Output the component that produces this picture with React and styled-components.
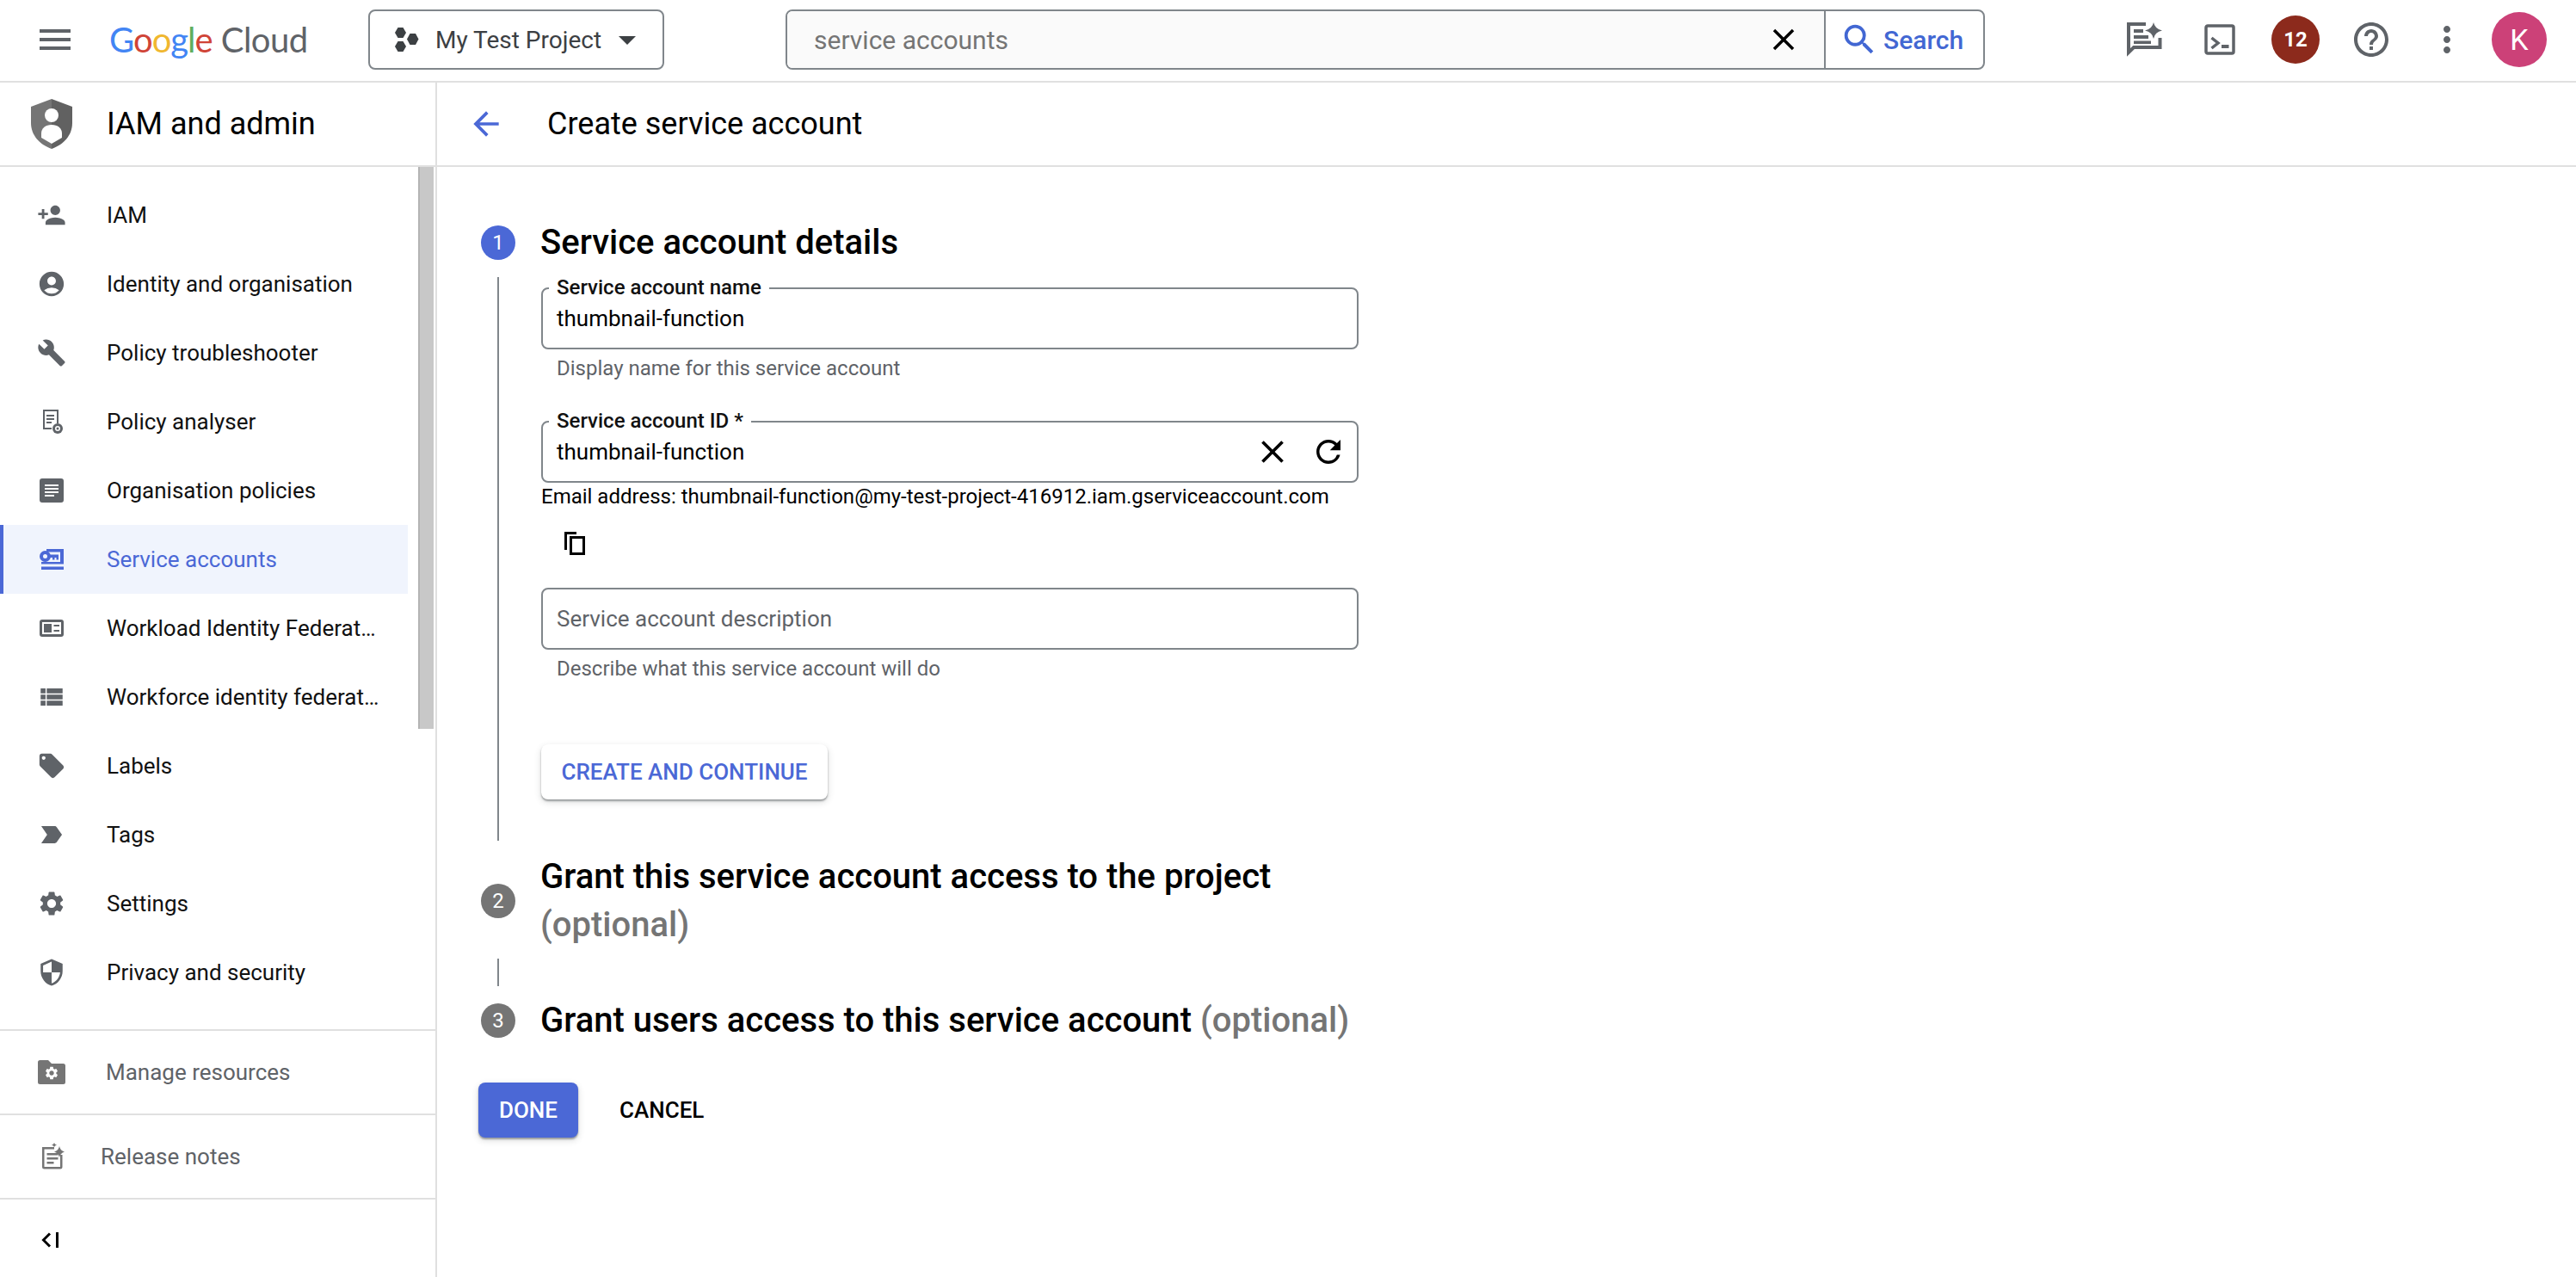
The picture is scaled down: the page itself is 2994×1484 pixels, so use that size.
import React from 'react'
import styled, { createGlobalStyle } from 'styled-components'
import {
  MdMenu, MdArrowBack, MdClose, MdSearch, MdHelpOutline, MdMoreVert, MdPersonAdd, MdAccountCircle,
  MdBuild, MdViewList, MdLocalOffer, MdLabelImportant, MdSettings, MdSecurity, MdRefresh,
  MdArrowDropDown,
} from 'react-icons/md'

const GEAR = 'M19.14 12.94c.04-.3.06-.61.06-.94 0-.32-.02-.64-.07-.94l2.03-1.58c.18-.14.23-.41.12-.61l-1.92-3.32c-.12-.22-.37-.29-.59-.22l-2.39.96c-.5-.38-1.03-.7-1.62-.94l-.36-2.54c-.04-.24-.24-.41-.48-.41h-3.84c-.24 0-.43.17-.47.41l-.36 2.54c-.59.24-1.13.57-1.62.94l-2.39-.96c-.22-.08-.47 0-.59.22L2.74 8.87c-.12.21-.08.47.12.61l2.03 1.58c-.05.3-.09.63-.09.94s.02.64.07.94l-2.03 1.58c-.18.14-.23.41-.12.61l1.92 3.32c.12.22.37.29.59.22l2.39-.96c.5.38 1.03.7 1.62.94l.36 2.54c.05.24.24.41.48.41h3.84c.24 0 .44-.17.47-.41l.36-2.54c.59-.24 1.13-.56 1.62-.94l2.39.96c.22.08.47 0 .59-.22l1.92-3.32c.12-.22.07-.47-.12-.61l-2.01-1.58zM12 15.6c-1.98 0-3.6-1.62-3.6-3.6s1.62-3.6 3.6-3.6 3.6 1.62 3.6 3.6-1.62 3.6-3.6 3.6z'

const GlobalStyle = createGlobalStyle`
  html, body { margin: 0; padding: 0; background: #fff; }
  body { font-family: Roboto, "Liberation Sans", sans-serif; color: #000; overflow: hidden; }
  * { box-sizing: border-box; }
`

const ShieldLogo = () => (
  <svg width="48" height="58" viewBox="0 0 48 58">
    <path d="M24 0 L0 9 V28 C0 42 10 53 24 58 Z" fill="#757575" />
    <path d="M24 0 L48 9 V28 C48 42 38 53 24 58 Z" fill="#616161" />
    <circle cx="24" cy="19" r="8" fill="#fff" />
    <path d="M24 30 C31 30 36 34 36 40 V45 L24 52 L12 45 V40 C12 34 17 30 24 30 Z" fill="#fff" />
  </svg>
)

const HexIcon = () => (
  <svg width="28" height="28" viewBox="0 0 28 28" fill="#3c4043">
    <path d="M3.5 0 H9.5 L13 6 L9.5 12 H3.5 L0 6 Z" />
    <path d="M17.5 7 H24 L27.5 13.5 L24 20 H17.5 L14 13.5 Z" />
    <path d="M3.5 16 H9.5 L13 22 L9.5 28 H3.5 L0 22 Z" />
  </svg>
)

const SparkChat = () => (
  <svg width="41" height="40" viewBox="0 0 41 40" fill="#5f6368">
    <path d="M22 2 H2 V35 L8 29 H38.5 V18" fill="none" stroke="#5f6368" strokeWidth="4" />
    <rect x="8" y="8" width="11" height="4" />
    <rect x="8" y="15" width="17" height="4" />
    <rect x="8" y="21.5" width="20" height="3.5" />
    <path d="M31 0 Q32.5 7.5 41 9.5 Q32.5 11 31 19 Q29.5 11 21 9.5 Q29.5 7.5 31 0 Z" />
  </svg>
)

const TerminalIcon = () => (
  <svg width="36" height="36" viewBox="0 0 36 36">
    <rect x="2" y="2" width="32" height="32" rx="2" fill="none" stroke="#5f6368" strokeWidth="3.5" />
    <path d="M8.5 16 L16 22 L8.5 28" fill="none" stroke="#5f6368" strokeWidth="3.5" />
    <rect x="20" y="24" width="8.5" height="4" fill="#5f6368" />
  </svg>
)

const AnalyserIcon = () => (
  <svg viewBox="0 0 34 34" fill="#5f6368">
    <path d="M7 3 H25 V19 H23 V5 H9 V24 H17 V26 H7 Z" />
    <rect x="11" y="9" width="9" height="2" />
    <rect x="11" y="13" width="9" height="2" />
    <rect x="11" y="17" width="6" height="2" />
    <circle cx="24" cy="25" r="6" />
    <circle cx="24" cy="25" r="3" fill="#fff" />
    <circle cx="24" cy="25" r="1.5" />
  </svg>
)

const PoliciesIcon = () => (
  <svg viewBox="0 0 34 34" fill="#5f6368">
    <path fillRule="evenodd" d="M6 3 H28 A3 3 0 0 1 31 6 V28 A3 3 0 0 1 28 31 H6 A3 3 0 0 1 3 28 V6 A3 3 0 0 1 6 3 Z M9 10 V12 H25 V10 Z M9 14 V16 H25 V14 Z M9 18 V20 H25 V18 Z M9 22 V24 H20 V22 Z" />
  </svg>
)

const ServiceAccountIcon = () => (
  <svg viewBox="0 0 34 34" fill="currentColor">
    <path fillRule="evenodd" d="M9.5 7 A6.5 6.5 0 1 1 9.5 20 A6.5 6.5 0 1 1 9.5 7 Z M9.5 11 A2.5 2.5 0 1 0 9.5 16 A2.5 2.5 0 1 0 9.5 11 Z" />
    <path d="M11 5 H31 V22.5 H5 V20 H27 V8.5 H11 Z" />
    <rect x="15" y="11.5" width="10" height="3.5" />
    <rect x="18" y="15" width="2.5" height="2.5" />
    <rect x="22.5" y="15" width="2.5" height="2.5" />
    <rect x="5" y="25.5" width="26" height="3.5" />
  </svg>
)

const WorkloadIcon = () => (
  <svg viewBox="0 0 34 34" fill="#5f6368">
    <rect x="3" y="7" width="28" height="20" rx="3" />
    <rect x="6" y="10" width="22" height="14" fill="#fff" />
    <rect x="8" y="12" width="9" height="10" />
    <rect x="19.5" y="13" width="6.5" height="2" />
    <rect x="19.5" y="19" width="6.5" height="2" />
  </svg>
)

const FolderGearIcon = () => (
  <svg viewBox="0 0 36 36">
    <path d="M4.5 4 H14 L18 8 H31.5 A2.5 2.5 0 0 1 34 10.5 V29.5 A2.5 2.5 0 0 1 31.5 32 H4.5 A2.5 2.5 0 0 1 2 29.5 V6.5 A2.5 2.5 0 0 1 4.5 4 Z" fill="#757575" />
    <svg x="9" y="10" width="18" height="18" viewBox="0 0 24 24"><path d={GEAR} fill="#fff" /></svg>
  </svg>
)

const ReleaseIcon = () => (
  <svg viewBox="0 0 34 34" fill="#757575">
    <path d="M6 6 H20 V8.5 H8.5 V29 H27 V15 H29.5 V29 A2.5 2.5 0 0 1 27 31.5 H8.5 A2.5 2.5 0 0 1 6 29 Z" />
    <rect x="11.5" y="13" width="13" height="2.5" />
    <rect x="11.5" y="18" width="13" height="2.5" />
    <rect x="11.5" y="23" width="8" height="2.5" />
    <path d="M26 5 Q27 10 32 11.5 Q27 13 26 18 Q25 13 20 11.5 Q25 10 26 5 Z" />
    <path d="M20 1 Q20.6 3 23 3.5 Q20.6 4 20 6 Q19.4 4 17 3.5 Q19.4 3 20 1 Z" />
  </svg>
)

const CollapseIcon = () => (
  <svg width="20" height="18" viewBox="0 0 20 18">
    <path d="M10 1.5 L2.5 9 L10 16.5" fill="none" stroke="#000" strokeWidth="3" />
    <rect x="17" y="0" width="3" height="18" fill="#000" />
  </svg>
)

const CopyIcon = () => (
  <svg width="24" height="27" viewBox="0 0 24 27" fill="#000">
    <path d="M0 0 H14 V3 H3 V21 H0 Z" />
    <path fillRule="evenodd" d="M6 5 H24 V27 H6 Z M9 8 V24 H21 V8 Z" />
  </svg>
)

const navItems = [
  { label: 'IAM', Icon: MdPersonAdd },
  { label: 'Identity and organisation', Icon: MdAccountCircle },
  { label: 'Policy troubleshooter', Icon: MdBuild },
  { label: 'Policy analyser', Icon: AnalyserIcon },
  { label: 'Organisation policies', Icon: PoliciesIcon },
  { label: 'Service accounts', Icon: ServiceAccountIcon, active: true },
  { label: 'Workload Identity Federation', Icon: WorkloadIcon },
  { label: 'Workforce identity federation', Icon: MdViewList },
  { label: 'Labels', Icon: MdLocalOffer },
  { label: 'Tags', Icon: MdLabelImportant },
  { label: 'Settings', Icon: MdSettings },
  { label: 'Privacy and security', Icon: MdSecurity },
]

export default function App() {
  return (
    <Page>
      <GlobalStyle />
      <TopBar>
        <MenuButton><MdMenu size={48} /></MenuButton>
        <Logo>
          <Letter $c="#4285f4">G</Letter><Letter $c="#d04437">o</Letter><Letter $c="#f0b72f">o</Letter>
          <Letter $c="#4285f4">g</Letter><Letter $c="#5fae5f">l</Letter><Letter $c="#d04437">e</Letter>
          <CloudWord>Cloud</CloudWord>
        </Logo>
        <ProjectPicker>
          <HexIcon />
          <ProjectName>My Test Project</ProjectName>
          <MdArrowDropDown size={48} color="#3c4043" />
        </ProjectPicker>
        <SearchBox>
          <SearchField>
            <SearchText>service accounts</SearchText>
            <MdClose size={42} color="#000" />
          </SearchField>
          <SearchButton><MdSearch size={46} /><span>Search</span></SearchButton>
        </SearchBox>
        <TopActions>
          <ActionSlot><SparkChat /></ActionSlot>
          <ActionSlot><TerminalIcon /></ActionSlot>
          <ActionSlot><Badge>12</Badge></ActionSlot>
          <ActionSlot><MdHelpOutline size={48} /></ActionSlot>
          <ActionSlot><MdMoreVert size={48} /></ActionSlot>
          <Avatar>K</Avatar>
        </TopActions>
      </TopBar>
      <Body>
        <Sidebar>
          <SideHeader>
            <ShieldLogo />
            <SideTitle>IAM and admin</SideTitle>
          </SideHeader>
          <NavArea>
            <NavList>
              {navItems.map(({ label, Icon, active }) => (
                <NavRow key={label} $active={active}>
                  <NavIcon $active={active}><Icon /></NavIcon>
                  <NavLabel>{label}</NavLabel>
                </NavRow>
              ))}
            </NavList>
            <ScrollThumb />
          </NavArea>
          <FootRow>
            <NavIcon $size={36} $left={42} $muted><FolderGearIcon /></NavIcon>
            <FootLabel $gap={45}>Manage resources</FootLabel>
          </FootRow>
          <FootRow>
            <NavIcon $left={43} $muted><ReleaseIcon /></NavIcon>
            <FootLabel $gap={40}>Release notes</FootLabel>
          </FootRow>
          <CollapseRow><CollapseIcon /></CollapseRow>
        </Sidebar>
        <Main>
          <MainHeader>
            <BackArrow><MdArrowBack size={44} /></BackArrow>
            <PageTitle>Create service account</PageTitle>
          </MainHeader>
          <Content>
            <StepHead>
              <StepNumber $active>1</StepNumber>
              <StepTitle>Service account details</StepTitle>
            </StepHead>
            <StepBody>
              <FieldBox>
                <FieldLabel>Service account name</FieldLabel>
                <FieldValue>thumbnail-function</FieldValue>
              </FieldBox>
              <Hint>Display name for this service account</Hint>
              <FieldBox $gap={47}>
                <FieldLabel>Service account ID *</FieldLabel>
                <FieldValue>thumbnail-function</FieldValue>
                <FieldActions>
                  <MdClose size={44} />
                  <MdRefresh size={42} />
                </FieldActions>
              </FieldBox>
              <EmailLine>Email address: thumbnail-function@my-test-project-416912.iam.gserviceaccount.com</EmailLine>
              <CopyRow><CopyIcon /></CopyRow>
              <FieldBox $gap={22}>
                <FieldValue $placeholder>Service account description</FieldValue>
              </FieldBox>
              <Hint>Describe what this service account will do</Hint>
              <RaisedButton>CREATE AND CONTINUE</RaisedButton>
            </StepBody>
            <StepHead $top={14}>
              <StepNumber>2</StepNumber>
              <StepTitle>Grant this service account access to the project <Optional>(optional)</Optional></StepTitle>
            </StepHead>
            <Connector />
            <StepHead $top={12}>
              <StepNumber>3</StepNumber>
              <StepTitle>Grant users access to this service account <Optional>(optional)</Optional></StepTitle>
            </StepHead>
            <FormActions>
              <DoneButton>DONE</DoneButton>
              <CancelButton>CANCEL</CancelButton>
            </FormActions>
          </Content>
        </Main>
      </Body>
    </Page>
  )
}

const Page = styled.div`
  width: 2994px;
  height: 1484px;
  display: flex;
  flex-direction: column;
  overflow: hidden;
`
const TopBar = styled.header`
  height: 96px;
  flex: none;
  display: flex;
  align-items: center;
  padding: 0 34px 2px 40px;
  border-bottom: 2px solid #e0e0e0;
`
const MenuButton = styled.div`
  display: flex;
  color: #5f6368;
`
const Logo = styled.div`
  flex: none;
  margin-left: 39px;
  width: 301px;
  font-family: Lato, sans-serif;
  font-size: 40px;
  line-height: 60px;
  letter-spacing: -1px;
  white-space: nowrap;
`
const Letter = styled.span`
  color: ${p => p.$c};
`
const CloudWord = styled.span`
  color: #5f6368;
  margin-left: 10px;
  letter-spacing: -0.5px;
`
const ProjectPicker = styled.div`
  flex: none;
  width: 344px;
  height: 70px;
  display: flex;
  align-items: center;
  padding-left: 29px;
  border: 2px solid #80868b;
  border-radius: 8px;
`
const ProjectName = styled.span`
  margin-left: 19px;
  margin-right: 6px;
  font-size: 28px;
  color: #3c4043;
  white-space: nowrap;
`
const SearchBox = styled.div`
  flex: none;
  width: 1394px;
  height: 70px;
  margin-left: 141px;
  display: flex;
  border: 2px solid #80868b;
  border-radius: 8px;
  overflow: hidden;
`
const SearchField = styled.div`
  flex: 1;
  display: flex;
  align-items: center;
  justify-content: space-between;
  padding: 0 26px 0 31px;
  background: #fafafa;
  border-right: 2px solid #80868b;
`
const SearchText = styled.span`
  font-size: 30px;
  color: #757575;
`
const SearchButton = styled.div`
  width: 183px;
  display: flex;
  align-items: center;
  gap: 5px;
  padding-left: 16px;
  font-size: 30px;
  font-weight: 500;
  color: #4267d3;
`
const TopActions = styled.div`
  margin-left: auto;
  display: flex;
  align-items: center;
`
const ActionSlot = styled.div`
  width: 88px;
  display: flex;
  justify-content: center;
  color: #5f6368;
`
const Badge = styled.div`
  width: 56px;
  height: 56px;
  border-radius: 50%;
  background: #8c2a1c;
  color: #fff;
  font-size: 24px;
  font-weight: 700;
  display: flex;
  align-items: center;
  justify-content: center;
`
const Avatar = styled.div`
  width: 64px;
  height: 64px;
  margin-left: 8px;
  border-radius: 50%;
  background: #cc4178;
  color: #fff;
  font-size: 34px;
  display: flex;
  align-items: center;
  justify-content: center;
`
const Body = styled.div`
  flex: 1;
  min-height: 0;
  display: flex;
`
const Sidebar = styled.aside`
  width: 508px;
  flex: none;
  display: flex;
  flex-direction: column;
  border-right: 2px solid #e0e0e0;
`
const SideHeader = styled.div`
  height: 98px;
  flex: none;
  display: flex;
  align-items: center;
  gap: 40px;
  padding-left: 36px;
  border-bottom: 2px solid #e0e0e0;
`
const SideTitle = styled.div`
  font-size: 36px;
  color: #000;
`
const NavArea = styled.div`
  height: 1004px;
  flex: none;
  display: flex;
  border-bottom: 2px solid #e0e0e0;
`
const NavList = styled.nav`
  width: 474px;
  padding-top: 16px;
`
const NavRow = styled.div`
  height: 80px;
  display: flex;
  align-items: center;
  padding-left: 43px;
  color: ${p => (p.$active ? '#4b68d6' : '#111')};
  background: ${p => (p.$active ? '#f0f4fd' : 'transparent')};
  box-shadow: ${p => (p.$active ? 'inset 4px 0 0 #4b68d6' : 'none')};
`
const NavIcon = styled.span`
  width: ${p => p.$size || 34}px;
  height: ${p => p.$size || 34}px;
  flex: none;
  margin-left: ${p => (p.$left ? `${p.$left}px` : '0')};
  color: ${p => (p.$active ? '#4b68d6' : p.$muted ? '#757575' : '#5f6368')};
  > svg {
    display: block;
    width: 100%;
    height: 100%;
  }
`
const NavLabel = styled.span`
  width: 318px;
  margin-left: 47px;
  font-size: 26px;
  white-space: nowrap;
  overflow: hidden;
  text-overflow: ellipsis;
`
const ScrollThumb = styled.div`
  width: 18px;
  height: 653px;
  margin-left: 12px;
  background: #c8c8c8;
  border-left: 2px solid #b4b4b4;
`
const FootRow = styled.div`
  height: 98px;
  flex: none;
  display: flex;
  align-items: center;
  border-bottom: 2px solid #e0e0e0;
`
const FootLabel = styled.span`
  margin-left: ${p => p.$gap}px;
  font-size: 26px;
  color: #5f6368;
`
const CollapseRow = styled.div`
  flex: 1;
  display: flex;
  align-items: center;
  padding: 4px 0 0 48px;
`
const Main = styled.main`
  flex: 1;
  min-width: 0;
  display: flex;
  flex-direction: column;
`
const MainHeader = styled.div`
  height: 98px;
  flex: none;
  display: flex;
  align-items: center;
  padding-left: 35px;
  border-bottom: 2px solid #e0e0e0;
`
const BackArrow = styled.div`
  display: flex;
  color: #4b68d6;
`
const PageTitle = styled.h1`
  margin: 0 0 0 49px;
  font-size: 36px;
  font-weight: 400;
  color: #000;
`
const Content = styled.div`
  padding: 60px 0 0 51px;
`
const StepHead = styled.div`
  width: 1040px;
  margin-top: ${p => p.$top || 0}px;
  display: flex;
  align-items: center;
  gap: 29px;
`
const StepNumber = styled.div`
  width: 40px;
  height: 40px;
  flex: none;
  border-radius: 50%;
  background: ${p => (p.$active ? '#4b68d6' : '#757575')};
  color: #fff;
  font-size: 24px;
  display: flex;
  align-items: center;
  justify-content: center;
`
const StepTitle = styled.h2`
  width: 970px;
  margin: 0;
  font-size: 40px;
  font-weight: 500;
  line-height: 56px;
  color: #000;
`
const Optional = styled.span`
  color: #757575;
  font-weight: 500;
`
const StepBody = styled.div`
  width: 1020px;
  height: 655px;
  margin: 12px 0 0 19px;
  padding: 12px 0 0 49px;
  border-left: 2px solid #80868b;
`
const FieldBox = styled.div`
  position: relative;
  width: 950px;
  height: 72px;
  margin-top: ${p => p.$gap || 0}px;
  display: flex;
  align-items: center;
  padding: 0 16px;
  border: 2px solid #80868b;
  border-radius: 8px;
`
const FieldLabel = styled.label`
  position: absolute;
  top: -16px;
  left: 7px;
  padding: 0 9px;
  background: #fff;
  font-size: 24px;
  line-height: 28px;
  font-weight: 500;
  color: #111;
`
const FieldValue = styled.span`
  font-size: 26px;
  color: ${p => (p.$placeholder ? '#5f6368' : '#000')};
`
const FieldActions = styled.div`
  margin-left: auto;
  margin-right: -4px;
  display: flex;
  align-items: center;
  gap: 22px;
  color: #000;
`
const Hint = styled.div`
  margin-top: 8px;
  padding-left: 18px;
  font-size: 24px;
  line-height: 28px;
  color: #5f6368;
`
const EmailLine = styled.div`
  font-size: 24px;
  line-height: 32px;
  color: #000;
`
const CopyRow = styled.div`
  height: 60px;
  margin-top: 8px;
  display: flex;
  align-items: center;
  padding-left: 27px;
`
const RaisedButton = styled.div`
  width: 333px;
  height: 64px;
  margin-top: 74px;
  display: flex;
  align-items: center;
  justify-content: center;
  border-radius: 8px;
  background: #fff;
  color: #4b68d6;
  font-size: 26px;
  font-weight: 500;
  box-shadow: 0 2px 2px rgba(60, 64, 67, 0.45), 0 3px 7px 1px rgba(60, 64, 67, 0.15);
`
const Connector = styled.div`
  width: 2px;
  height: 32px;
  margin: 11px 0 0 19px;
  background: #80868b;
`
const FormActions = styled.div`
  margin: 44px 0 0 -3px;
  display: flex;
  gap: 24px;
`
const DoneButton = styled.div`
  width: 116px;
  height: 64px;
  display: flex;
  align-items: center;
  justify-content: center;
  border-radius: 8px;
  background: #4b68d6;
  color: #fff;
  font-size: 26px;
  font-weight: 500;
  box-shadow: 0 2px 2px rgba(60, 64, 67, 0.45), 0 3px 7px 1px rgba(60, 64, 67, 0.15);
`
const CancelButton = styled.div`
  height: 64px;
  display: flex;
  align-items: center;
  padding: 0 24px;
  color: #000;
  font-size: 26px;
  font-weight: 500;
`
